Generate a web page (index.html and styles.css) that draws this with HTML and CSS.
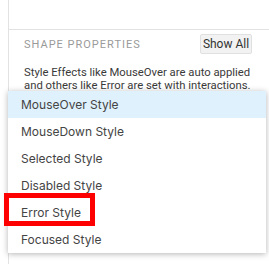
FILE: index.html
```html
<!DOCTYPE html>
<html>
<head>
    <title>Shape properties</title>
    <meta charset="utf-8" />
    <link rel="stylesheet" href="styles.css">
</head>
<body>
    <div class="panel">
        <div class="panel-top"></div>
        <div class="section">
            <div class="section-head">
                <span class="section-title">Shape Properties</span>
                <button class="flat-button">Show All</button>
            </div>
            <p class="hint">Style Effects like MouseOver are auto applied and others like Error are set with interactions.</p>
        </div>
    </div>

    <ul class="style-menu">
        <li class="style-item active">MouseOver Style</li>
        <li class="style-item">MouseDown Style</li>
        <li class="style-item">Selected Style</li>
        <li class="style-item">Disabled Style</li>
        <li class="style-item">Error Style</li>
        <li class="style-item">Focused Style</li>
        <li class="callout"></li>
    </ul>
</body>
</html>
```

FILE: styles.css
```css
html,body {
    height: 100%;
    margin: 0;
    overflow: hidden;
    background-color: #ffffff;
    font-family: Roboto, 'Liberation Sans', Arial, sans-serif;
    color: #333;
}

.panel {
    margin-left: 8px;
    height: 100%;
    border-left: 1px solid #e2e2e2;
}

.panel-top {
    height: 29px;
    border-bottom: 1px solid #e2e2e2;
}

.section {
    padding: 4px 17px 0 15px;
}

.section-head {
    display: flex;
    justify-content: space-between;
    align-items: center;
    height: 20px;
}

.section-title {
    font-size: 11px;
    letter-spacing: 1px;
    text-transform: uppercase;
    color: #9a9a9a;
}

.flat-button {
    width: 52px;
    height: 20px;
    padding: 0;
    border: 1px solid #e0e0e0;
    border-radius: 2px;
    background-color: #f2f2f2;
    font-family: Roboto, 'Liberation Sans', Arial, sans-serif;
    font-size: 12px;
    color: #333;
}

.hint {
    margin: 12px -10px 0 0;
    font-size: 11.3px;
    line-height: 13px;
    color: #3a3a3a;
}

/* dropdown over the panel */
.style-menu {
    position: absolute;
    left: 8px;
    top: 91px;
    width: 258px;
    margin: 0;
    padding: 0;
    list-style: none;
    background-color: #ffffff;
    box-shadow: 0 1px 6px rgba(0, 0, 0, 0.3);
}

.style-item {
    height: 27px;
    line-height: 27px;
    padding-left: 13px;
    font-family: Inter, 'Noto Sans', sans-serif;
    font-size: 12px;
    color: #444;
}

.style-item.active {
    background-color: #dff1fc;
}

.callout {
    position: absolute;
    left: -4px;
    top: 102px;
    width: 81px;
    height: 23px;
    border: 5px solid #ff0000;
}
```
